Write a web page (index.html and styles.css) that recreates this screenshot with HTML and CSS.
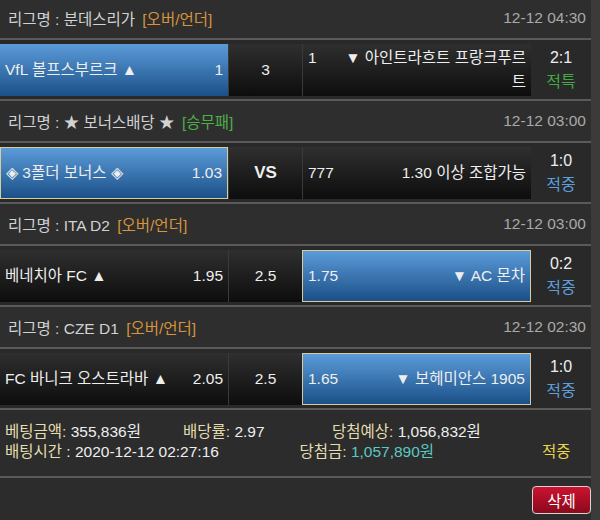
FILE: index.html
```html
<!DOCTYPE html>
<html>

<head>
    <meta charset="utf-8">
    <title>Bet history</title>

    <link rel="stylesheet" href="styles.css">
</head>

<body>

    <div class="wrapper">
        <div class="list">

            <div class="game">
                <div class="game_head">
                    <span class="league">리그명 : 분데스리가 <span class="type_ou">[오버/언더]</span></span>
                    <span class="time">12-12 04:30</span>
                </div>
                <div class="game_row">
                    <div class="cell home pick">
                        <div class="inner"><span class="team">VfL 볼프스부르크 ▲</span><span>1</span></div>
                    </div>
                    <div class="cell mid">3</div>
                    <div class="cell away">
                        <div class="inner"><span>1</span><span class="team">▼ 아인트라흐트 프랑크푸르트</span></div>
                    </div>
                    <div class="result">
                        <div>2:1</div>
                        <div class="st_void">적특</div>
                    </div>
                </div>
            </div>

            <div class="game">
                <div class="game_head">
                    <span class="league">리그명 : ★ 보너스배당 ★ <span class="type_wdl">[승무패]</span></span>
                    <span class="time">12-12 03:00</span>
                </div>
                <div class="game_row">
                    <div class="cell home pick sel">
                        <div class="inner"><span class="team">◈ 3폴더 보너스 ◈</span><span>1.03</span></div>
                    </div>
                    <div class="cell mid vs">VS</div>
                    <div class="cell away">
                        <div class="inner"><span>777</span><span class="team">1.30 이상 조합가능</span></div>
                    </div>
                    <div class="result">
                        <div>1:0</div>
                        <div class="st_hit">적중</div>
                    </div>
                </div>
            </div>

            <div class="game">
                <div class="game_head">
                    <span class="league">리그명 : ITA D2 <span class="type_ou">[오버/언더]</span></span>
                    <span class="time">12-12 03:00</span>
                </div>
                <div class="game_row">
                    <div class="cell home">
                        <div class="inner"><span class="team">베네치아 FC ▲</span><span>1.95</span></div>
                    </div>
                    <div class="cell mid">2.5</div>
                    <div class="cell away pick sel">
                        <div class="inner"><span>1.75</span><span class="team">▼ AC 몬차</span></div>
                    </div>
                    <div class="result">
                        <div>0:2</div>
                        <div class="st_hit">적중</div>
                    </div>
                </div>
            </div>

            <div class="game">
                <div class="game_head">
                    <span class="league">리그명 : CZE D1 <span class="type_ou">[오버/언더]</span></span>
                    <span class="time">12-12 02:30</span>
                </div>
                <div class="game_row">
                    <div class="cell home">
                        <div class="inner"><span class="team">FC 바니크 오스트라바 ▲</span><span>2.05</span></div>
                    </div>
                    <div class="cell mid">2.5</div>
                    <div class="cell away pick sel">
                        <div class="inner"><span>1.65</span><span class="team">▼ 보헤미안스 1905</span></div>
                    </div>
                    <div class="result">
                        <div>1:0</div>
                        <div class="st_hit">적중</div>
                    </div>
                </div>
            </div>

        </div>

        <div class="summary">
            <div class="sum_line">
                <span class="sum_a"><span class="label">베팅금액:</span> 355,836원</span>
                <span class="sum_b"><span class="label">배당률:</span> 2.97</span>
                <span><span class="label">당첨예상:</span> 1,056,832원</span>
            </div>
            <div class="sum_line">
                <span class="sum_time"><span class="label">배팅시간</span> : 2020-12-12 02:27:16</span>
                <span class="sum_win"><span class="label">당첨금:</span> <span class="win_money">1,057,890원</span></span>
                <span class="sum_state">적중</span>
            </div>
        </div>

        <div class="actions">
            <button class="del_btn">삭제</button>
        </div>
    </div>

</body>

</html>
```

FILE: styles.css
```css
* {
    box-sizing: border-box;
}

body {
    margin: 0;
    background-color: #3b3b3b;
    font-family: "Liberation Sans", "Noto Sans CJK KR", sans-serif;
    font-size: 15.5px;
    color: #eeeeee;
}

.wrapper {
    width: 591px;
    min-height: 520px;
    background-color: #2c2c2c;
    overflow: hidden;
}

.list {
    margin-top: -2px;
}

/* league header */
.game_head {
    height: 42px;
    display: flex;
    align-items: center;
    justify-content: space-between;
    padding: 0 5px 0 8px;
    background-color: #2e2e2e;
    border-bottom: 2px solid #5a5a5a;
    color: #d2d2d2;
}

.type_ou {
    color: #d8943c;
    margin-left: 3px;
}

.type_wdl {
    color: #4fae4a;
    margin-left: 3px;
}

.time {
    color: #a9a9a9;
}

/* match row */
.game_row {
    display: flex;
    padding: 4px 0 3px;
    background-color: #292929;
    border-bottom: 2px solid #5a5a5a;
}

.cell {
    height: 52px;
    display: flex;
    align-items: center;
    padding: 0 5px;
    background: linear-gradient(#2f2f2f, #0d0d0d);
}

.home {
    width: 228px;
}

.mid {
    width: 74px;
    justify-content: center;
    border-left: 1px solid #3a3a3a;
}

.vs {
    font-weight: bold;
    font-size: 17px;
}

.away {
    width: 229px;
    border-left: 1px solid #3a3a3a;
}

.pick {
    background: linear-gradient(#5b9bd9, #1b5088);
}

.sel {
    border: 1px solid #d8cd98;
}

.inner {
    width: 100%;
    display: flex;
    align-items: baseline;
    justify-content: space-between;
    gap: 10px;
    line-height: 24px;
}

.away .team {
    text-align: right;
    max-width: 182px;
}

.result {
    width: 60px;
    display: flex;
    flex-direction: column;
    justify-content: center;
    align-items: center;
    line-height: 24px;
    font-size: 16px;
}

.st_void {
    color: #44a845;
}

.st_hit {
    color: #5c9fdc;
}

/* bet summary */
.summary {
    padding: 12px 5px 14px;
    line-height: 20px;
    border-bottom: 2px solid #5a5a5a;
}

.sum_line {
    display: flex;
    white-space: nowrap;
}

.label {
    color: #e4ddb0;
}

.sum_a {
    width: 178px;
}

.sum_b {
    width: 149px;
}

.sum_time {
    width: 297px;
}

.sum_win {
    width: 229px;
}

.win_money {
    color: #5cc9c2;
}

.sum_state {
    width: 60px;
    text-align: center;
    color: #e6d64c;
}

.actions {
    display: flex;
    justify-content: flex-end;
    padding-top: 8px;
}

.del_btn {
    width: 59px;
    height: 28px;
    border: 1px solid #d4d4d4;
    border-radius: 4px;
    background: linear-gradient(#cc1230, #8a0a1d);
    color: #ffffff;
    font-family: inherit;
    font-size: 15.5px;
    cursor: pointer;
}
```
